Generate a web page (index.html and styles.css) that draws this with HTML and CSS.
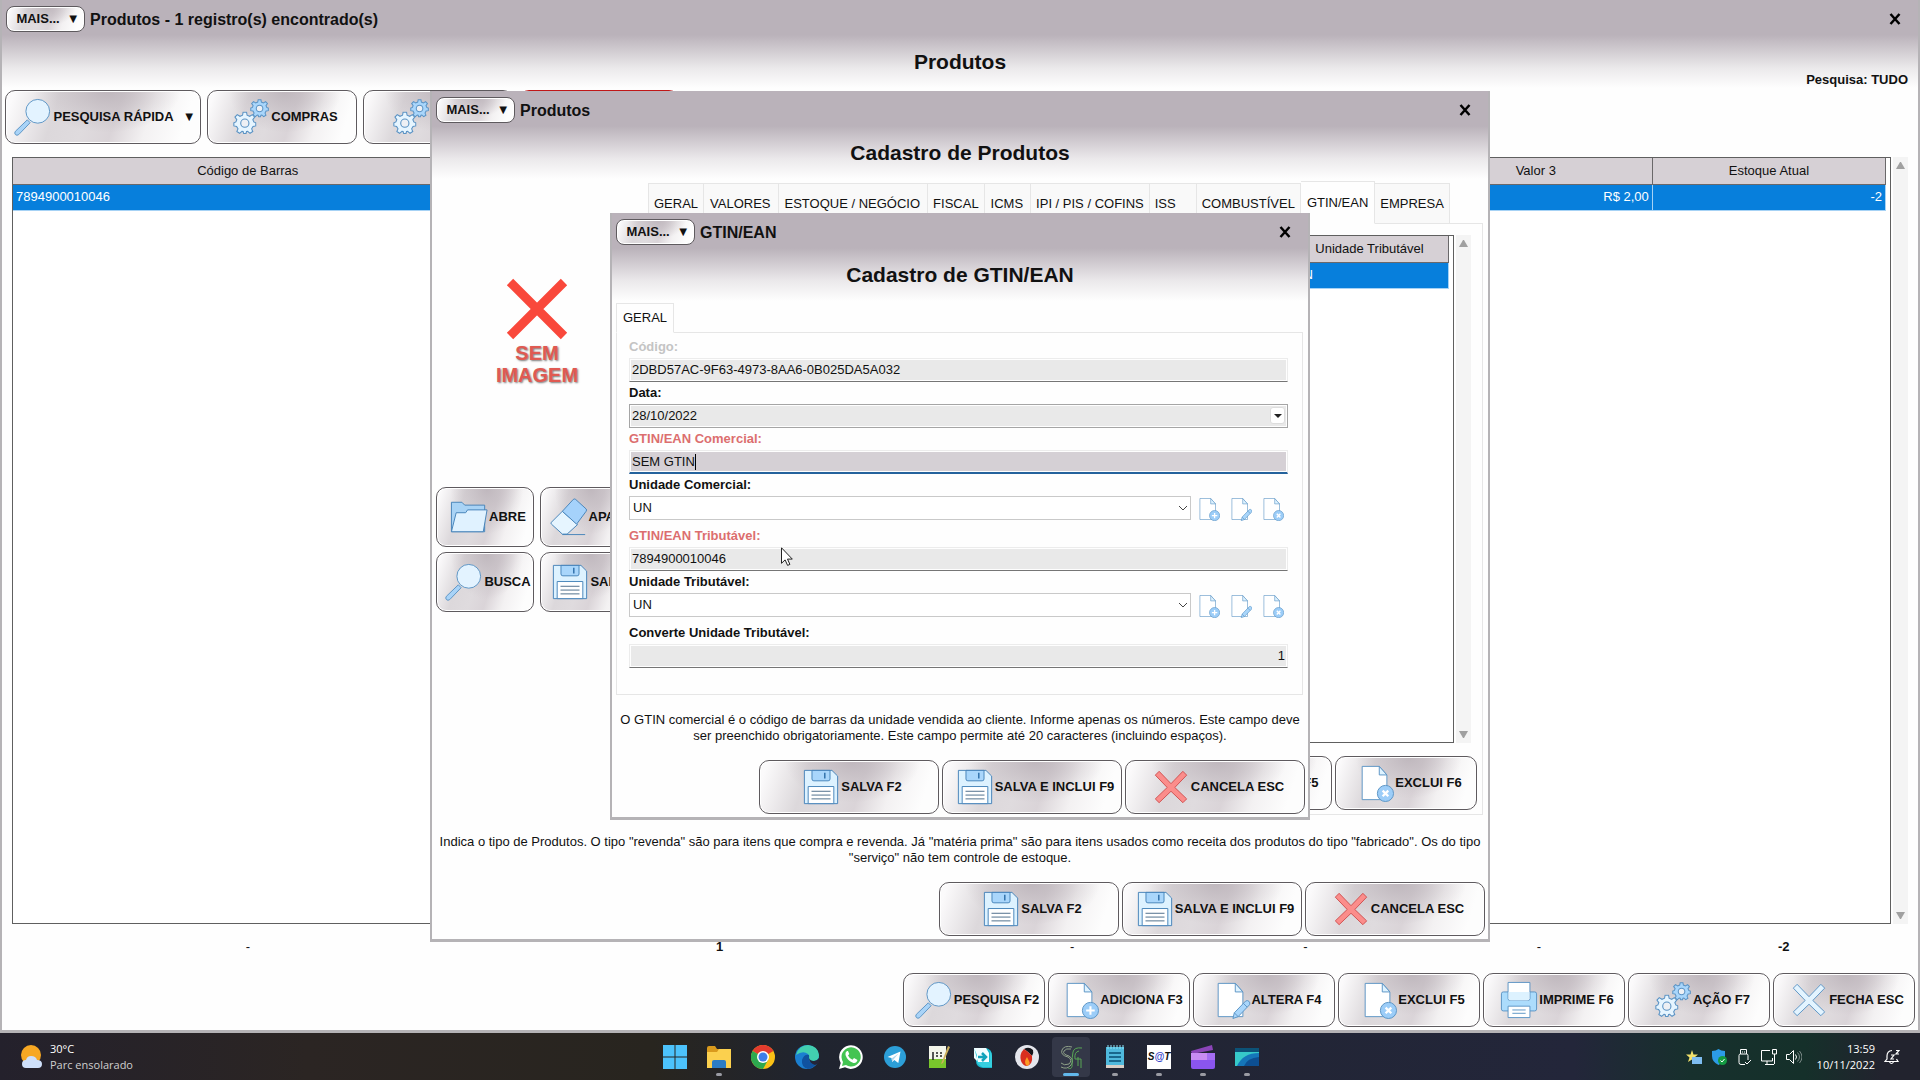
FILE: index.html
```html
<!DOCTYPE html>
<html lang="pt-BR">
<head>
	<meta charset="utf-8">
	<title>Produtos</title>
	<link rel="stylesheet" href="styles.css">
</head>
<body>

<!-- ICONS -->
<svg class="sprite" aria-hidden="true">
	<symbol id="i-search" viewBox="0 0 40 40">
		<path d="M14 23l3 3L5 38.500q-2 1.500-3.500 0t0-3.500z" fill="#a9d3f7" stroke="#5b93c4"/>
		<circle cx="25" cy="14" r="12.500" fill="#e3f3ff" stroke="#5b93c4"/>
	</symbol>
	<symbol id="i-gear" viewBox="-13 -13 26 26">
		<path d="M-1.900-12h3.800l.6 3.300 2.800 1.200 3-1.900 2.500 2.700-2 2.800 1 2.500 2.200 1v3.400l-3 .6-1.500 2.600 1.200 3-3 1.900-2.600-2.200-1.200.3-.6 2.100h-2.600l-.6-2.100-1.200-.3-2.600 2.200-3-1.900 1.200-3-1.500-2.600-3-.6v-3.400l2.200-1 1-2.500-2-2.800 2.500-2.700 3 1.900 2.800-1.200z"/>
		<circle r="4.500" fill="#eef0f4"/>
	</symbol>
	<symbol id="i-gears" viewBox="0 0 40 40">
		<use href="#i-gear" x="19" y="1" width="20" height="20" fill="#a9d6fb" stroke="#5b93c4" stroke-width="1.400"/>
		<use href="#i-gear" x="1" y="14" width="25" height="25" fill="#e6f5ff" stroke="#5b93c4" stroke-width="1.200"/>
	</symbol>
	<symbol id="i-page" viewBox="0 0 40 40">
		<path d="M6.500 2.500h18l8 9v26h-26z" fill="#fff" stroke="#5b93c4"/>
		<path d="M24.500 2.500v9h8z" fill="#dff3ff" stroke="#5b93c4"/>
	</symbol>
	<symbol id="i-add" viewBox="0 0 40 40">
		<use href="#i-page"/>
		<circle cx="31" cy="31" r="8.500" fill="#9ccdf8" stroke="#5b93c4"/>
		<path d="M31 26.500v9M26.500 31h9" stroke="#fff" stroke-width="2.200"/>
	</symbol>
	<symbol id="i-edit" viewBox="0 0 40 40">
		<use href="#i-page"/>
		<path d="M22 39.500l1.500-6 12-12.500q2-1 3.500.5t.5 3.500l-12 12.500z" fill="#a9d6fb" stroke="#5b93c4"/>
		<path d="M23.500 33.500l4 4M33 23.500l4 4" stroke="#5b93c4"/>
	</symbol>
	<symbol id="i-del" viewBox="0 0 40 40">
		<use href="#i-page"/>
		<circle cx="31" cy="31" r="8.500" fill="#9ccdf8" stroke="#5b93c4"/>
		<path d="M28 28l6 6M34 28l-6 6" stroke="#fff" stroke-width="2.400"/>
	</symbol>
	<symbol id="i-save" viewBox="0 0 40 40">
		<path d="M2.500 2.500h29l6 6v29h-35z" fill="#ddf2ff" stroke="#4683b8"/>
		<path d="M10.500 2.500h19v9q0 2-2 2h-15q-2 0-2-2z" fill="#a9d6fb" stroke="#4683b8"/>
		<path d="M24 5v6" stroke="#2b6da8" stroke-width="1.500"/>
		<path d="M6.500 37.500v-18h27v18z" fill="#fff" stroke="#4683b8"/>
		<path d="M10 24.500h20M10 28.500h20M10 32.500h20" stroke="#4a6a88"/>
	</symbol>
	<symbol id="i-x" viewBox="0 0 40 40">
		<path d="M3.500 7.500l4-4L20 16.500l12.500-13 4 4L24 20.500l12.500 12-4 4L20 24.500l-12.500 12-4-4L16 20.500z"/>
	</symbol>
	<symbol id="i-print" viewBox="0 0 40 40">
		<rect x="1.500" y="11.500" width="37" height="20" rx="2" fill="#acdcfc" stroke="#5b93c4"/>
		<path d="M8.500 1.500h23v17q0 2-2 2h-19q-2 0-2-2z" fill="#fff" stroke="#5b93c4"/>
		<path d="M9 11.500h22v7q0 2-2 2h-18q-2 0-2-2z" fill="#ddf2ff"/>
		<path d="M8.500 26.500h23v12h-23z" fill="#fff" stroke="#5b93c4"/>
		<path d="M13 30.500h14M13 34h14" stroke="#5b93c4"/>
	</symbol>
	<symbol id="i-folder" viewBox="0 0 40 40">
		<path d="M1.500 35.500v-31h11l3 3h21v28z" fill="#a9d3f5" stroke="#4683b8"/>
		<path d="M1.500 35.500l5-20h10l2-3h20.500l-4 23z" fill="#e0f2ff" stroke="#4683b8"/>
	</symbol>
	<symbol id="i-eraser" viewBox="0 0 40 40">
		<path d="M13 14l16 14-11 10h-5L1.500 27.500q-1-1 0-2z" fill="#e6f5ff" stroke="#4683b8"/>
		<path d="M13 14L24.500 1.500q1-1 2.500 0l11 10q1 1 0 2.500L28 27.500z" fill="#a5d2fb" stroke="#4683b8"/>
		<path d="M13 38.500h24" stroke="#4683b8"/>
	</symbol>
	<symbol id="i-chevron" viewBox="0 0 10 6"><path d="M1 1l4 4 4-4" fill="none" stroke="#444"/></symbol>
</svg>

<!-- MAIN WINDOW -->
<main class="desk">
	<section class="window main">
		<header class="titlebar">
			<button class="btn more">MAIS... <span>▼</span></button>
			<strong class="caption">Produtos - 1 registro(s) encontrado(s)</strong>
			<button class="close" aria-label="Fechar"><svg viewBox="0 0 12 12"><path d="M1.500 1l9 10M10.500 1l-9 10"/></svg></button>
		</header>
		<div class="heading">
			<h1>Produtos</h1>
			<p class="filter">Pesquisa: TUDO</p>
		</div>
		<div class="toolbar">
			<button class="btn quick"><svg class="ico"><use href="#i-search"/></svg>PESQUISA RÁPIDA <span>▼</span></button>
			<button class="btn"><svg class="ico"><use href="#i-gears"/></svg>COMPRAS</button>
			<button class="btn blank"><svg class="ico"><use href="#i-gears"/></svg></button>
			<button class="btn danger"></button>
		</div>
		<div class="list">
			<div class="grid">
				<table>
					<colgroup><col class="wide"><col class="wide"><col><col><col><col></colgroup>
					<thead><tr><th>Código de Barras</th><th></th><th></th><th></th><th>Valor 3</th><th>Estoque Atual</th></tr></thead>
					<tbody><tr><td>7894900010046</td><td></td><td></td><td></td><td class="num">R$ 2,00</td><td class="num">-2</td></tr></tbody>
				</table>
			</div>
			<div class="scroll"><i class="up"></i><i class="down"></i></div>
		</div>
		<div class="totals">
			<span>-</span><b>1</b><span>-</span><span>-</span><span>-</span><b>-2</b>
		</div>
		<div class="actions small">
			<button class="btn"><svg class="ico"><use href="#i-search"/></svg>PESQUISA F2</button>
			<button class="btn"><svg class="ico"><use href="#i-add"/></svg>ADICIONA F3</button>
			<button class="btn"><svg class="ico"><use href="#i-edit"/></svg>ALTERA F4</button>
			<button class="btn"><svg class="ico"><use href="#i-del"/></svg>EXCLUI F5</button>
			<button class="btn"><svg class="ico"><use href="#i-print"/></svg>IMPRIME F6</button>
			<button class="btn"><svg class="ico"><use href="#i-gears"/></svg>AÇÃO F7</button>
			<button class="btn"><svg class="ico blue"><use href="#i-x"/></svg>FECHA ESC</button>
		</div>
	</section>

	<!-- PRODUCT DIALOG -->
	<div class="overlay">
		<section class="window product">
			<header class="titlebar">
				<button class="btn more">MAIS... <span>▼</span></button>
				<strong class="caption">Produtos</strong>
				<button class="close" aria-label="Fechar"><svg viewBox="0 0 12 12"><path d="M1.500 1l9 10M10.500 1l-9 10"/></svg></button>
			</header>
			<div class="heading"><h1>Cadastro de Produtos</h1></div>
			<div class="columns">
				<aside class="side">
					<div class="noimage">
						<svg viewBox="0 0 62 62"><path d="M4 4l54 54M58 4L4 58" stroke="#f9483b" stroke-width="9"/></svg>
						<span>SEM<br>IMAGEM</span>
					</div>
					<div class="sidebtns">
						<button class="btn"><svg class="ico"><use href="#i-folder"/></svg>ABRE</button>
						<button class="btn"><svg class="ico"><use href="#i-eraser"/></svg>APAGA</button>
						<button class="btn"><svg class="ico"><use href="#i-search"/></svg>BUSCA</button>
						<button class="btn"><svg class="ico"><use href="#i-save"/></svg>SALVA</button>
					</div>
				</aside>
				<div class="tabbed">
					<nav class="tabs">
						<button>GERAL</button>
						<button class="pad">VALORES</button>
						<button class="pad">ESTOQUE / NEGÓCIO</button>
						<button>FISCAL</button>
						<button class="pad">ICMS</button>
						<button>IPI / PIS / COFINS</button>
						<button class="iss">ISS</button>
						<button>COMBUSTÍVEL</button>
						<button class="on">GTIN/EAN</button>
						<button>EMPRESA</button>
					</nav>
					<div class="panel listpanel">
						<div class="list">
							<div class="grid">
								<table>
									<colgroup><col class="rest"><col class="unit"></colgroup>
									<thead><tr><th></th><th>Unidade Tributável</th></tr></thead>
									<tbody><tr><td></td><td>UN</td></tr></tbody>
								</table>
							</div>
							<div class="scroll"><i class="up"></i><i class="down"></i></div>
						</div>
						<div class="actions small">
							<button class="btn"><svg class="ico"><use href="#i-edit"/></svg>ALTERA F5</button>
							<button class="btn"><svg class="ico"><use href="#i-del"/></svg>EXCLUI F6</button>
						</div>
					</div>
				</div>
			</div>
			<p class="hint">Indica o tipo de Produtos. O tipo "revenda" são para itens que compra e revenda. Já "matéria prima" são para itens usados como receita dos produtos do tipo "fabricado". Os do tipo "serviço" não tem controle de estoque.</p>
			<div class="actions">
				<button class="btn"><svg class="ico"><use href="#i-save"/></svg>SALVA F2</button>
				<button class="btn"><svg class="ico"><use href="#i-save"/></svg>SALVA E INCLUI F9</button>
				<button class="btn"><svg class="ico red"><use href="#i-x"/></svg>CANCELA ESC</button>
			</div>
		</section>
	</div>

	<!-- GTIN DIALOG -->
	<div class="overlay">
		<section class="window gtin">
			<header class="titlebar">
				<button class="btn more">MAIS... <span>▼</span></button>
				<strong class="caption">GTIN/EAN</strong>
				<button class="close" aria-label="Fechar"><svg viewBox="0 0 12 12"><path d="M1.500 1l9 10M10.500 1l-9 10"/></svg></button>
			</header>
			<div class="heading"><h1>Cadastro de GTIN/EAN</h1></div>
			<nav class="tabs single"><button class="on">GERAL</button></nav>
			<form class="panel form">
				<label class="off" for="codigo">Código:</label>
				<div class="field"><input id="codigo" type="text" value="2DBD57AC-9F63-4973-8AA6-0B025DA5A032" readonly></div>

				<label for="data">Data:</label>
				<div class="field boxed"><input id="data" type="text" value="28/10/2022"><button type="button" class="drop" aria-label="Abrir calendário"><i></i></button></div>

				<label class="req" for="gtinc">GTIN/EAN Comercial:</label>
				<div class="field focus"><input id="gtinc" type="text" value="SEM GTIN"><i class="caret"></i></div>

				<label for="unc">Unidade Comercial:</label>
				<div class="pick">
					<div class="combo"><select id="unc"><option>UN</option></select><svg><use href="#i-chevron"/></svg></div>
					<button type="button" aria-label="Adiciona"><svg><use href="#i-add"/></svg></button>
					<button type="button" aria-label="Altera"><svg><use href="#i-edit"/></svg></button>
					<button type="button" aria-label="Exclui"><svg><use href="#i-del"/></svg></button>
				</div>

				<label class="req" for="gtint">GTIN/EAN Tributável:</label>
				<div class="field"><input id="gtint" type="text" value="7894900010046"></div>

				<label for="unt">Unidade Tributável:</label>
				<div class="pick">
					<div class="combo"><select id="unt"><option>UN</option></select><svg><use href="#i-chevron"/></svg></div>
					<button type="button" aria-label="Adiciona"><svg><use href="#i-add"/></svg></button>
					<button type="button" aria-label="Altera"><svg><use href="#i-edit"/></svg></button>
					<button type="button" aria-label="Exclui"><svg><use href="#i-del"/></svg></button>
				</div>

				<label for="conv">Converte Unidade Tributável:</label>
				<div class="field"><input id="conv" class="num" type="text" value="1"></div>
			</form>
			<p class="hint">O GTIN comercial é o código de barras da unidade vendida ao cliente. Informe apenas os números. Este campo deve ser preenchido obrigatoriamente. Este campo permite até 20 caracteres (incluindo espaços).</p>
			<div class="actions">
				<button class="btn"><svg class="ico"><use href="#i-save"/></svg>SALVA F2</button>
				<button class="btn"><svg class="ico"><use href="#i-save"/></svg>SALVA E INCLUI F9</button>
				<button class="btn"><svg class="ico red"><use href="#i-x"/></svg>CANCELA ESC</button>
			</div>
			<svg class="cursor" viewBox="0 0 12 19"><path d="M.5.8v15.500l3.600-3.400 2.500 5.500 2.300-1-2.400-5.300h4.800z" fill="#fff" stroke="#222"/></svg>
		</section>
	</div>
</main>

<!-- TASKBAR -->
<footer class="taskbar">
	<div class="weather">
		<svg viewBox="0 0 24 24">
			<circle cx="11" cy="10" r="10" fill="#f7a823"/>
			<path d="M6 23q-4 0-4-4t4-4q1-4 5-4 5 0 6 4 5 0 5 4t-4 4z" fill="#cfe0fa"/>
		</svg>
		<p>30°C<br><span>Parc ensolarado</span></p>
	</div>
	<div class="apps">
		<button aria-label="Iniciar"><svg viewBox="0 0 24 24"><path d="M0 0h11.500v11.500H0zM12.500 0H24v11.500H12.500zM0 12.500h11.500V24H0zM12.500 12.500H24V24H12.500z" fill="#4cc2fb"/></svg></button>
		<button class="open" aria-label="Explorador"><svg viewBox="0 0 24 24"><path d="M0 3q0-2 2-2h6l2 3h12q2 0 2 2v5H0z" fill="#d99a1d"/><path d="M0 7h10l2-3h12v19H0z" fill="#fbd04e"/><path d="M5 23v-6q0-2 2-2h10q2 0 2 2v6z" fill="#2b7cc4"/></svg></button>
		<button aria-label="Chrome"><svg viewBox="0 0 24 24"><circle cx="12" cy="12" r="12" fill="#fbc116"/><path d="M12 12L1.600 6A12 12 0 0122.400 6z" fill="#e33b2e"/><path d="M12 12L1.600 6A12 12 0 0012 24l5-9z" fill="#2da94f"/><circle cx="12" cy="12" r="6" fill="#fff"/><circle cx="12" cy="12" r="4.500" fill="#3f7ee8"/></svg></button>
		<button aria-label="Edge"><svg viewBox="0 0 24 24"><circle cx="12" cy="12" r="12" fill="#1b7fd0"/><path d="M1 10Q4 0 13 0q10 1 11 10 0 6-6 6-4 0-4-3 1-2-1-4-5-4-12 1z" fill="#42cfb0"/><path d="M14 13q-1 6 8 5-3 5-9 6-7-2-6-9 2-6 7-5z" fill="#10529f"/><path d="M14 13q1 3 5 3 3 0 5-3v5l-4 2q-6-2-6-7z" fill="#232538"/></svg></button>
		<button aria-label="WhatsApp"><svg viewBox="0 0 24 24"><path d="M0 24l1.700-6A11.800 11.800 0 116 22.300z" fill="#fff"/><path d="M3 21l1-4a9.600 9.600 0 113 3z" fill="#43c452"/><path d="M8 6q-2 1-1.500 4 2 6 8 8 3 .5 4-3l-3.500-2-1.500 1.800q-3-1-4.500-4.300l1.300-1.500L9 6z" fill="#fff"/></svg></button>
		<button aria-label="Telegram"><svg viewBox="0 0 24 24"><circle cx="12" cy="12" r="11" fill="#2c9fd8"/><path d="M4.500 12l13-5.500-2.200 11.500-4-3-2 2-.8-4z" fill="#fff"/><path d="M8.500 13.500l7-5-5 6-1.200 2.500z" fill="#b5d9ee"/></svg></button>
		<button aria-label="Notepad++"><svg viewBox="0 0 24 24"><path d="M2 1h17v22H2z" fill="#f3f5ea"/><path d="M2 14h17v9H2z" fill="#79c62c"/><path d="M6 7v8M9 8h2M9 11h2M13 8h2M13 11h2" stroke="#222" stroke-width="1.500" fill="none"/><path d="M21 1l2 1-7 16-2 1z" fill="#cdb05c"/></svg></button>
		<button aria-label="Assistente"><svg viewBox="0 0 24 24"><path d="M3 3h12q6 1 6 8v12h-9q-7-1-7-7z" fill="#19b6cb"/><path d="M3 3h12l3 5v9H7l-4-4z" fill="#f2fdff"/><path d="M3 3l3 7v8l5 4h10V11q0-3-2-5v11H7z" fill="#35cfdf"/><path d="M7 12h8M11 8l4 4-4 4" stroke="#12a3bb" stroke-width="2.500" fill="none"/></svg></button>
		<button aria-label="Firebird"><svg viewBox="0 0 24 24"><circle cx="12" cy="12" r="12" fill="#e4e6ec"/><path d="M9 4q5-3 9 1 1 3-1 6l-4-4z" fill="#16161b"/><path d="M9 4q-5 5-3 12 2 5 6 5 6-2 5-10l-4-4z" fill="#d92e1e"/><path d="M12 12q-4 6 0 9 4-2 2-5z" fill="#fb9c23"/></svg></button>
		<button class="open active" aria-label="Sistema"><svg viewBox="0 0 24 24" fill="none" stroke="#8fa088"><path d="M13 2Q5 0 3 5t6 7q5 3 1 7-5 2-8-1M12 4Q7 3 5 6t5 5q6 4 2 9-4 5-10 2"/><path d="M23 3q-8-1-9 4t-1 12q1 5-4 5M20 6q-5 1-4 8h6v9M19 12v9" stroke="#58a555"/></svg></button>
		<button class="open" aria-label="Bloco de notas"><svg viewBox="0 0 24 24"><path d="M3 2h18v20H3z" fill="#4fb9dc"/><path d="M3 20h18v3H3z" fill="#d9cfc6"/><path d="M5 0v4M8 0v4M11 0v4M14 0v4M17 0v4M20 0v4" stroke="#8fe4f8"/><path d="M6 8h12M6 12h12M6 16h12" stroke="#19688c" stroke-width="2"/></svg></button>
		<button class="open sat" aria-label="SAT"><i>S<em>@</em>T</i></button>
		<button class="open" aria-label="Filmes"><svg viewBox="0 0 24 24"><path d="M0 6L21 0l1 5L1 9z" fill="#8b45b8"/><path d="M0 8h24v14q0 2-2 2H2q-2 0-2-2z" fill="#8a55ee"/><path d="M0 8h8v7H0zM8 8h8v7H8z" fill="#c98cf3"/><path d="M16 8h8v7h-8z" fill="#a56df2"/></svg></button>
		<button class="open" aria-label="Captura"><svg viewBox="0 0 24 24"><path d="M0 3h24v18H0z" fill="#1576b9"/><path d="M0 3h24v5Q8 8 2 21H0z" fill="#36c9c9"/><path d="M0 3h24v4H0z" fill="#0c5277"/><path d="M9 21q3-8 15-9v9z" fill="#0d4f92"/></svg></button>
	</div>
	<div class="tray">
		<svg viewBox="0 0 16 16"><path d="M6 1l1.500 4.500H12L8.500 8.500 10 13l-4-2.500L2 13l1.500-4.500L0 5.500h4.500z" fill="#f2e16b"/><path d="M6 8h10v7H6z" fill="#7dbcf0"/></svg>
		<svg viewBox="0 0 16 16"><path d="M7.500 0Q10 2 14 2v5q0 6-6.500 9Q1 13 1 7V2q4 0 6.500-2z" fill="#2c9be6"/><circle cx="11.500" cy="11.500" r="4.500" fill="#149a42"/><path d="M9.500 11.500l1.500 1.500 2.500-3" stroke="#fff" fill="none"/></svg>
		<svg viewBox="0 0 16 16" fill="none" stroke="#fff"><path d="M4.500 5V.5h6V5M6.500 2.500v1M8.500 2.500v1M9 15.500H5q-2 0-2-2v-7q0-1.500 1.500-1.500h6Q12 5 12 6.500V11M9 13l2 2 4-4"/></svg>
		<svg viewBox="0 0 16 16" fill="none" stroke="#fff"><path d="M9 1.500H.5v10.500h11V9M4 15.500h9M6 12v3.500M11.500.5h4V5h-4zM13.500 5v10"/></svg>
		<svg viewBox="0 0 16 16" fill="none" stroke="#fff"><path d="M.5 5.500h3l4-4v13l-4-4h-3zM9.500 5.500q2 2.500 0 5"/><path d="M11.500 3.500q4 4.500 0 9M13.500 2q5 6 0 12" stroke="#7c8a88"/></svg>
		<p class="clock">13:59<br>10/11/2022</p>
		<svg viewBox="0 0 16 16" fill="none" stroke="#fff"><path d="M8 1.500Q3 2 3 7v3l-2 2.500h13L12.500 10M5.500 13q2 3 4 0M7 6h3L7 10h3M12 1.500h3L12 5h3" stroke-width="1.200"/></svg>
	</div>
</footer>
</body>
</html>
```
FILE: styles.css
```css
* {
	box-sizing: border-box;
}

body {
	margin: 0;
	min-height: 100vh;
	display: flex;
	flex-direction: column;
	font: 13px/16px "Liberation Sans", Arial, sans-serif;
	color: #111;
	overflow: hidden;
}

h1, p {
	margin: 0;
}

button, input, select {
	font: inherit;
	color: inherit;
	margin: 0;
}

.sprite {
	position: absolute;
	width: 0;
	height: 0;
}

/* windows */
.desk {
	position: relative;
	flex: 1;
	display: flex;
}

.overlay {
	position: absolute;
	inset: 0;
	display: grid;
	place-items: center;
}

.window {
	display: flex;
	flex-direction: column;
	padding: 0 3px 3px;
	border: solid #b5b3b6;
	border-width: 0 2px 3px;
	background: #fefefe linear-gradient(#bab2ba 0, #bab2ba 35px, #d3ced3 52px, #ebe9eb 68px, #fefefe 88px) no-repeat 0 0 / 100% 90px;
}

.main {
	flex: 1;
}

.product {
	width: 1060px;
}

.gtin {
	position: relative;
	width: 700px;
}

.titlebar {
	height: 40px;
	padding: 6px 0 8px 1px;
	display: flex;
	align-items: center;
	gap: 5px;
}

.caption {
	font-size: 16px;
	line-height: 20px;
	padding-top: 1px;
	flex: 1;
}

.close {
	border: 0;
	background: none;
	padding: 0;
	width: 12px;
	height: 12px;
	margin-right: 14px;
}

.close svg {
	display: block;
	fill: none;
	stroke: #000;
	stroke-width: 2.5;
}

.heading {
	display: grid;
	padding-top: 10px;
	height: 50px;
}

.heading h1 {
	grid-area: 1 / 1;
	font-size: 21px;
	line-height: 24px;
	text-align: center;
}

.filter {
	grid-area: 1 / 1;
	align-self: end;
	justify-self: end;
	padding: 0 7px 2px 0;
	font-weight: bold;
}

/* buttons */
.btn {
	display: flex;
	align-items: center;
	justify-content: center;
	padding: 0 0 0 5px;
	border: 1px solid #5e5a5e;
	border-radius: 10px;
	box-shadow: inset 0 0 0 1px #fff;
	font-weight: bold;
	white-space: nowrap;
	background:
		radial-gradient(ellipse 38% 80% at 52% 0, #bfb7bd 0, rgba(200, 192, 198, 0) 100%),
		linear-gradient(108deg, #fbfafb 4%, #dcd8db 26%, #dfdbde 42%, #dad4d8 56%, #f3f1f2 72%, #fdfdfd 90%);
}

.more {
	width: 79px;
	height: 26px;
	gap: 7px;
	border-radius: 8px;
}

.ico {
	flex: none;
	width: 40px;
	height: 38px;
	fill: none;
}

.blue {
	fill: #e3f4ff;
	stroke: #5b93c4;
}

.red {
	fill: #fb8d8b;
	stroke: #cf4f4f;
}

.toolbar {
	display: flex;
	gap: 6px;
}

.toolbar .btn {
	width: 150px;
	height: 54px;
}

.toolbar .quick {
	width: 196px;
	padding-left: 3px;
}

.quick span {
	margin-left: 9px;
}

.toolbar .blank {
	padding-right: 60px;
}

.toolbar .danger {
	width: 160px;
	border-color: #c01818;
}

.actions {
	display: flex;
	justify-content: flex-end;
	gap: 3px;
}

.actions .btn {
	width: 180px;
	height: 54px;
}

.small .btn {
	width: 142px;
}

/* lists */
.list {
	flex: 1;
	display: flex;
	gap: 2px;
}

.main > .list {
	margin: 13px 7px 0;
}

.grid {
	flex: 1;
	border: 1px solid #5f5f5f;
	padding-right: 4px;
	background: #fff;
}

.grid table {
	width: 100%;
	table-layout: fixed;
	border-collapse: collapse;
}

.grid .wide {
	width: 25.1%;
}

.grid .unit {
	width: 158px;
}

.grid th, .grid td {
	height: 26px;
	padding: 0 3px;
	font-weight: normal;
}

.grid th {
	background: #d6d0d5;
	border-right: 1px solid #6a686a;
	border-bottom: 1px solid #6a686a;
}

.grid td {
	background: #077fdc;
	color: #fff;
	border-right: 1px solid #a6d2f5;
	border-bottom: 1px solid #a6d2f5;
}

.num {
	text-align: right;
}

.scroll {
	width: 15px;
	padding: 5px 3px;
	display: flex;
	flex-direction: column;
	justify-content: space-between;
	background: #f4f4f4;
}

.scroll i {
	border: 0 solid transparent;
	border-width: 0 4px;
}

.scroll .up {
	border-bottom: 7px solid #a0a0a0;
}

.scroll .down {
	border-top: 7px solid #a0a0a0;
}

.totals {
	display: grid;
	grid-template-columns: 471fr 471fr 233fr 233fr 233fr 256fr;
	padding: 15px 3px 18px 7px;
	text-align: center;
}

/* product dialog */
.columns {
	display: flex;
	gap: 8px;
	min-height: 634px;
	padding: 0 2px 0 1px;
}

.side {
	width: 202px;
	padding-top: 97px;
}

.noimage {
	height: 209px;
	text-align: center;
	font-weight: bold;
	font-size: 20px;
	line-height: 22px;
	color: #e05a52;
	text-shadow: 1px 1px 2px #777;
}

.noimage svg {
	display: block;
	width: 62px;
	height: 62px;
	margin: 0 auto 2px;
}

.sidebtns {
	display: grid;
	grid-template-columns: 1fr 1fr;
	gap: 5px 6px;
}

.sidebtns .btn {
	height: 60px;
}

.tabbed {
	flex: 1;
	display: flex;
	flex-direction: column;
}

.tabs {
	position: relative;
	display: flex;
	align-items: flex-end;
	height: 43px;
	margin-bottom: -1px;
	padding-left: 2px;
}

.tabs button {
	height: 41px;
	padding: 0 5px;
	border: 1px solid #e6e6e6;
	border-left-width: 0;
	background: #f9f9f9;
}

.tabs button:first-child {
	border-left-width: 1px;
}

.tabs .pad {
	padding: 0 7px 0 6px;
}

.tabs .iss {
	padding: 0 20px 0 5px;
}

.tabs .on {
	height: 43px;
	padding: 0 6px;
	background: #fefefe;
	border-bottom-color: #fefefe;
}

.single {
	height: 30px;
	padding: 0;
	margin-left: 1px;
}

.tabs.single .on {
	height: 30px;
}

.panel {
	border: 1px solid #e6e6e6;
}

.listpanel {
	flex: 1;
	display: flex;
	flex-direction: column;
	gap: 13px;
	padding: 11px 5px 4px 6px;
}

.listpanel .list {
	margin-right: 6px;
}

.hint {
	padding: 17px 1px 16px;
	text-align: center;
}

.product .hint {
	padding-top: 19px;
}

/* form */
.form {
	margin: 0 2px 0 1px;
	padding: 6px 14px 23px 12px;
}

.form label {
	display: block;
	font-weight: bold;
	margin-bottom: 3px;
}

.form .off {
	color: #c4c4c4;
}

.form .req {
	color: #dc6e6e;
}

.field {
	position: relative;
	display: flex;
	height: 24px;
	margin-bottom: 3px;
	padding: 1px;
	border: 1px solid #ececec;
	border-bottom-color: #757575;
}

.field input {
	flex: 1;
	min-width: 0;
	border: 0;
	padding: 0 1px;
	background: #e9e9e9;
	outline: 0;
}

.boxed {
	border-color: #a5a5a5;
}

.focus {
	border-bottom: 2px solid #24629c;
}

.focus input {
	background: #d5d0d5;
}

.caret {
	position: absolute;
	left: 65px;
	top: 3px;
	width: 1px;
	height: 16px;
	background: #000;
}

.drop {
	position: absolute;
	right: 2px;
	top: 2px;
	width: 15px;
	height: 17px;
	padding: 0;
	border: 1px solid #ddd;
	border-radius: 3px;
	background: #fff;
}

.drop i {
	display: block;
	margin: 0 auto;
	width: 0;
	border: solid transparent;
	border-width: 4px 4px 0;
	border-top-color: #222;
}

.pick {
	display: flex;
	align-items: center;
	height: 24px;
	margin-bottom: 8px;
	padding-right: 4px;
	gap: 8px;
}

.combo {
	position: relative;
	flex: 1;
	margin-right: -3px;
}

.combo select {
	display: block;
	width: 100%;
	height: 24px;
	padding: 0 3px;
	appearance: none;
	border: 1px solid #c9c9c9;
	border-radius: 0;
	background: #fff;
}

.combo svg {
	position: absolute;
	right: 3px;
	top: 9px;
	width: 10px;
	height: 6px;
	pointer-events: none;
}

.pick button {
	width: 24px;
	height: 24px;
	padding: 0;
	border: 0;
	background: none;
}

.pick button svg {
	display: block;
	width: 24px;
	height: 24px;
	margin-top: 1px;
}

.cursor {
	position: absolute;
	left: 169px;
	top: 334px;
	width: 12px;
	height: 19px;
}

/* taskbar */
.taskbar {
	height: 47px;
	display: grid;
	grid-template-columns: 1fr auto 1fr;
	align-items: center;
	color: #fff;
	font: 11px/16px "Open Sans", "Noto Sans", sans-serif;
	background: linear-gradient(90deg, #24212c 0, #2b2523 16%, #28251f 34%, #20242f 42%, #23263a 82%, #17302d 88%, #15302a 94%, #22232e 98%);
}

.weather {
	display: flex;
	align-items: center;
	gap: 6px;
	padding-left: 20px;
}

.weather svg {
	width: 24px;
	height: 24px;
}

.weather span {
	color: #cfcfcf;
}

.apps {
	display: flex;
	gap: 6px;
	padding-left: 2px;
}

.apps button {
	position: relative;
	width: 38px;
	height: 40px;
	padding: 0;
	border: 0;
	border-radius: 4px;
	background: none;
}

.apps svg {
	display: block;
	width: 24px;
	height: 24px;
	margin: 0 auto;
}

.apps .open::after {
	content: "";
	position: absolute;
	left: 16px;
	bottom: 1px;
	width: 6px;
	height: 3px;
	border-radius: 2px;
	background: #9a9ba3;
}

.apps .active {
	background: #343848;
}

.apps .active::after {
	left: 11px;
	width: 16px;
	background: #62b8ec;
}

.sat i {
	display: block;
	width: 24px;
	margin: 0 auto;
	background: #fff;
	color: #111;
	font: italic bold 10px/24px "Liberation Sans", Arial, sans-serif;
}

.sat em {
	color: #3744c9;
}

.tray {
	display: flex;
	align-items: center;
	justify-content: flex-end;
	gap: 9px;
	padding-right: 20px;
}

.tray svg {
	width: 16px;
	height: 16px;
}

.clock {
	width: 64px;
	text-align: right;
	white-space: nowrap;
}
```
